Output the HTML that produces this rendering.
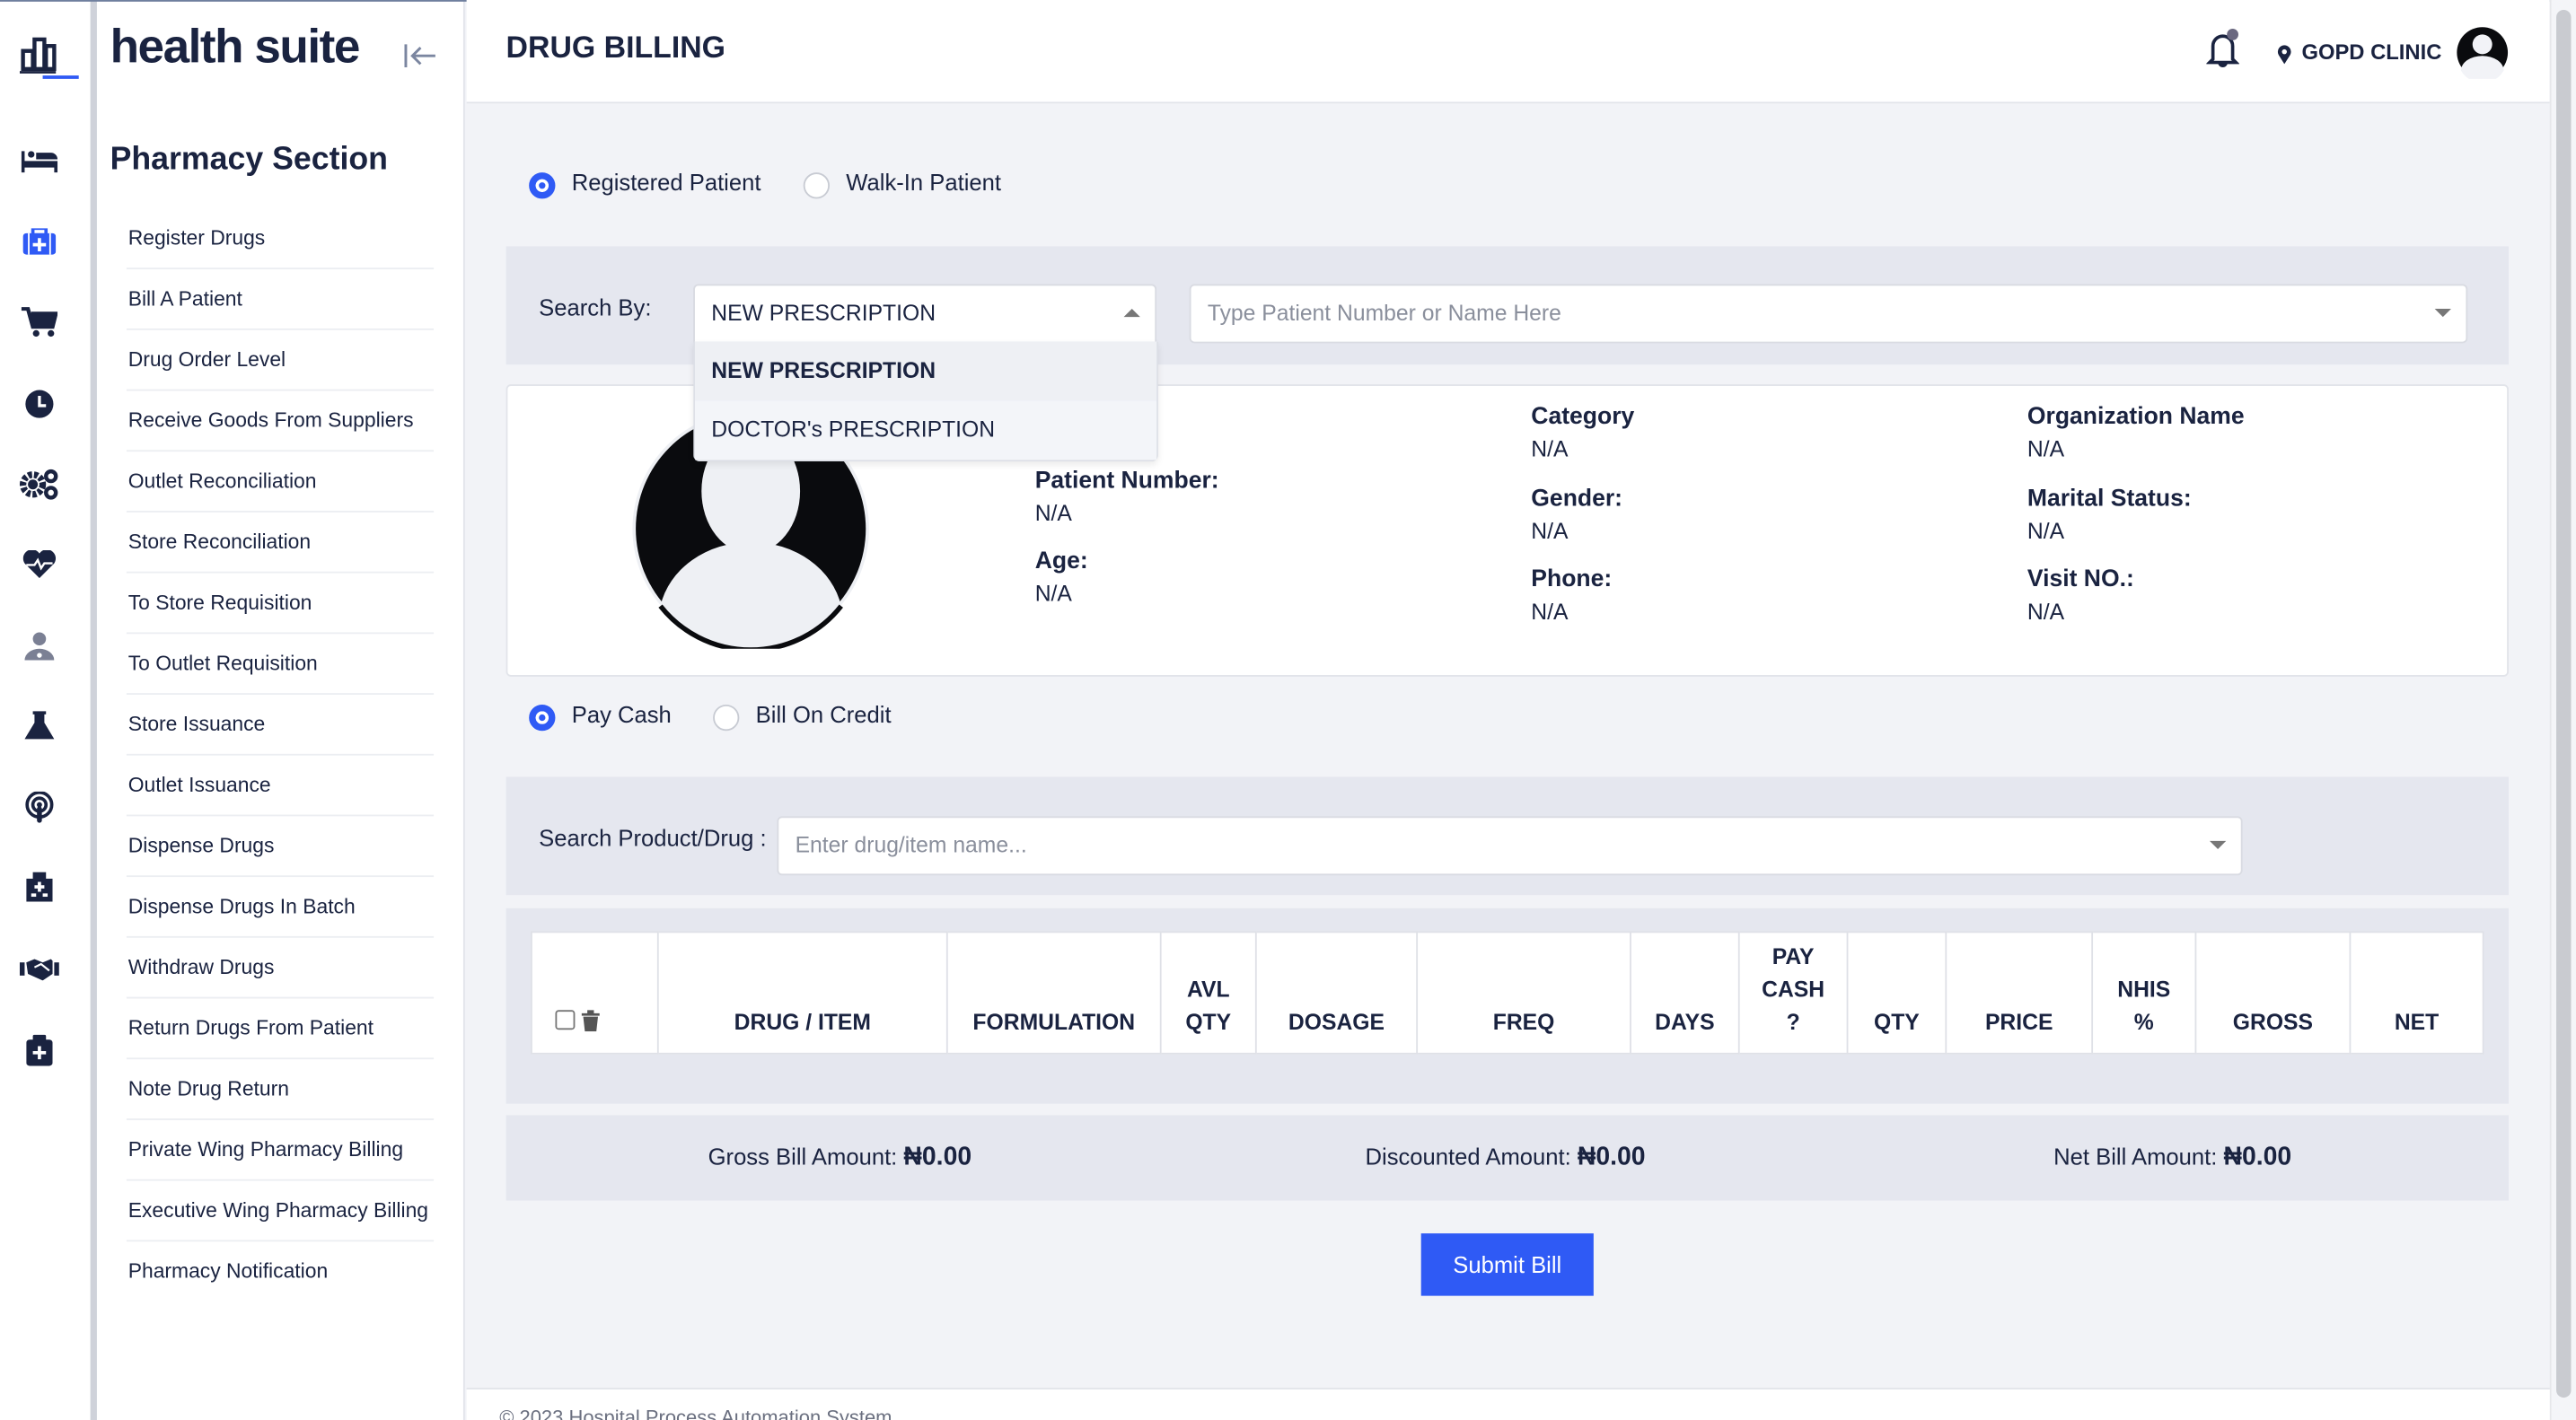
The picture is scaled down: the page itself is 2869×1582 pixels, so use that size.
<!DOCTYPE html>
<html><head><meta charset="utf-8"><style>
*{box-sizing:border-box;margin:0;padding:0}
html,body{width:2869px;height:1582px;overflow:hidden;background:#f2f3f7;font-family:"Liberation Sans",sans-serif;color:#1a2340}
#w{width:1568px;height:865px;transform:scale(1.82972);transform-origin:0 0;position:relative;background:#f2f3f7}
.a{position:absolute}
.nav{left:0;top:0;width:55px;height:865px;background:#fff}
.sep{left:55px;top:0;width:4px;height:865px;background:#cfd2da}
.side{left:59px;top:0;width:224px;height:865px;background:#fff;border-right:1px solid #e2e4ea}
.side ul{list-style:none;position:absolute;left:18px;top:127px;width:187px}
.side li{height:37px;line-height:37px;font-size:12.5px;padding-left:1px;border-bottom:1px solid #eceef2;color:#1a2340}
.side li:last-child{border:none}
.hdr{left:284px;top:0;width:1268px;height:63px;background:#fff;border-bottom:1px solid #e2e4ea}
.scroll{left:1552px;top:0;width:16px;height:865px;background:#f4f5f8;border-left:1px solid #e6e7eb}
.rad{width:16px;height:16px;border-radius:50%;border:1px solid #c8cbd3;background:#fff}
.rad.on{border:4px solid #2f5af5;box-shadow:inset 0 0 0 2px #fff;background:#2f5af5}
.lbl{font-size:14px;color:#1a2340}
.band{background:#e5e7ef}
.inp{background:#fff;border:1px solid #d9dbe2;border-radius:3px;font-size:13.5px;color:#8a8f9c;padding-left:10px;line-height:34px}
.k{font-weight:bold;font-size:14.5px;color:#1a2340}
.v{font-size:13.5px;color:#1a2340}
table{border-collapse:collapse;background:#fff}
td{border:1px solid #dfe1e7;font-weight:bold;font-size:13.5px;text-align:center;vertical-align:bottom;padding:0 4px 8px;line-height:20px;color:#1a2340}
.caret{width:0;height:0;border-left:5px solid transparent;border-right:5px solid transparent;border-top:5px solid #777}
</style></head><body><div id="w">
<div class="a nav">
<svg class="a" style="left:12px;top:20px" width="36" height="30" viewBox="0 0 36 30"><g fill="none" stroke="#1a2340" stroke-width="2.4"><rect x="2" y="11" width="6" height="11"/><rect x="9" y="4" width="6" height="18"/><rect x="16" y="8" width="5" height="14"/></g><line x1="0" y1="24" x2="22" y2="24" stroke="#1a2340" stroke-width="1.5"/><line x1="14" y1="27" x2="36" y2="27" stroke="#2f5af5" stroke-width="2"/></svg>
<svg class="a" style="left:13px;top:90px" width="23" height="16" viewBox="0 0 23 16"><path d="M0 2h2v6h20v7h-2v-3H2v3H0z M4 4a2 2 0 1 0 4 0a2 2 0 1 0-4 0z M9 3h9a4 4 0 0 1 4 4H9z" fill="#1a2340"/></svg>
<svg class="a" style="left:14px;top:139px" width="20" height="17" viewBox="0 0 20 17"><rect x="0" y="3" width="20" height="13" rx="2" fill="#2f5af5"/><rect x="6" y="0" width="8" height="4" fill="none" stroke="#2f5af5" stroke-width="2"/><path d="M9 6h2v3h3v2h-3v3H9v-3H6V9h3z" fill="#fff"/><rect x="3" y="3" width="1" height="13" fill="#fff"/><rect x="16" y="3" width="1" height="13" fill="#fff"/></svg>
<svg class="a" style="left:13px;top:187px" width="22" height="19" viewBox="0 0 22 19"><path d="M0 1h4l3 11h12l2-8H6" fill="none" stroke="#1a2340" stroke-width="2.4"/><path d="M6 5h15l-2 7H8z" fill="#1a2340"/><circle cx="9" cy="16" r="2" fill="#1a2340"/><circle cx="18" cy="16" r="2" fill="#1a2340"/></svg>
<svg class="a" style="left:15px;top:237px" width="18" height="18"><circle cx="9" cy="9" r="8.5" fill="#1a2340"/><path d="M9 4v6h4" stroke="#fff" stroke-width="1.8" fill="none"/></svg>
<svg class="a" style="left:12px;top:285px" width="24" height="20" viewBox="0 0 24 20"><circle cx="8" cy="10" r="6" fill="none" stroke="#1a2340" stroke-width="4" stroke-dasharray="2.4 1.2"/><circle cx="8" cy="10" r="3" fill="#1a2340"/><circle cx="19" cy="5" r="3" fill="none" stroke="#1a2340" stroke-width="2.4"/><circle cx="19" cy="15" r="3" fill="none" stroke="#1a2340" stroke-width="2.4"/></svg>
<svg class="a" style="left:14px;top:335px" width="20" height="17" viewBox="0 0 20 17"><path d="M10 17L1 8A5 5 0 0 1 10 2A5 5 0 0 1 19 8z" fill="#1a2340"/><path d="M2 9h5l2-3 2 5 2-3h5" stroke="#fff" stroke-width="1.3" fill="none"/></svg>
<svg class="a" style="left:15px;top:384px" width="18" height="18" viewBox="0 0 18 18"><circle cx="9" cy="5" r="4" fill="#7b8094"/><path d="M0 18a9 7 0 0 1 18 0z" fill="#7b8094"/><circle cx="9" cy="15" r="1.5" fill="#fff"/></svg>
<svg class="a" style="left:15px;top:433px" width="18" height="18" viewBox="0 0 18 18"><path d="M5 0h8v2h-1v5l6 10H0L6 7V2H5z" fill="#1a2340"/></svg>
<svg class="a" style="left:15px;top:482px" width="18" height="19" viewBox="0 0 18 19"><circle cx="9" cy="8" r="7.5" fill="none" stroke="#1a2340" stroke-width="2"/><circle cx="9" cy="8" r="4" fill="none" stroke="#1a2340" stroke-width="2"/><circle cx="9" cy="8" r="1.6" fill="#1a2340"/><rect x="7.5" y="9" width="3" height="10" rx="1.5" fill="#1a2340"/></svg>
<svg class="a" style="left:16px;top:531px" width="16" height="18" viewBox="0 0 16 18"><rect x="0" y="4" width="16" height="14" fill="#1a2340"/><rect x="4" y="0" width="8" height="5" fill="#1a2340"/><path d="M7 6h2v2h2v2H9v2H7v-2H5V8h2z" fill="#fff"/><rect x="3" y="13" width="3" height="2" fill="#fff"/><rect x="10" y="13" width="3" height="2" fill="#fff"/></svg>
<svg class="a" style="left:12px;top:583px" width="24" height="14" viewBox="0 0 24 14"><rect x="0" y="3" width="3" height="8" fill="#1a2340"/><rect x="21" y="3" width="3" height="8" fill="#1a2340"/><path d="M4 3l5-2 5 2 5-2 1 1v8l-6 4-9-4z" fill="#1a2340"/><path d="M9 6l4-2 5 4" stroke="#fff" stroke-width="1.2" fill="none"/></svg>
<svg class="a" style="left:16px;top:630px" width="16" height="19" viewBox="0 0 16 19"><rect x="0" y="3" width="16" height="16" rx="2" fill="#1a2340"/><rect x="4" y="0" width="8" height="4" rx="1" fill="#1a2340"/><path d="M7 7h2v3h3v2H9v3H7v-3H4v-2h3z" fill="#fff"/></svg>
</div>
<div class="a sep"></div>
<div class="a side">
<div class="a" style="left:8px;top:13px;font-size:29px;font-weight:bold;letter-spacing:-0.8px;color:#1a2340">health suite</div>
<svg class="a" style="left:187px;top:26px" width="20" height="16" viewBox="0 0 20 16"><path d="M1 1v14M19 8H5M10 3L5 8l5 5" stroke="#7b86a0" stroke-width="1.6" fill="none"/></svg>
<div class="a" style="left:8px;top:86px;font-size:19.5px;font-weight:bold;color:#1a2340">Pharmacy Section</div>
<ul><li>Register Drugs</li><li>Bill A Patient</li><li>Drug Order Level</li><li>Receive Goods From Suppliers</li><li>Outlet Reconciliation</li><li>Store Reconciliation</li><li>To Store Requisition</li><li>To Outlet Requisition</li><li>Store Issuance</li><li>Outlet Issuance</li><li>Dispense Drugs</li><li>Dispense Drugs In Batch</li><li>Withdraw Drugs</li><li>Return Drugs From Patient</li><li>Note Drug Return</li><li>Private Wing Pharmacy Billing</li><li>Executive Wing Pharmacy Billing</li><li>Pharmacy Notification</li></ul>
</div>
<div class="a" style="left:0;top:0;width:1568px;height:1px;background:#6f7f9e"></div>
<div class="a hdr">
<div class="a" style="left:24px;top:18px;font-size:18.5px;font-weight:bold;color:#1a2340">DRUG BILLING</div>
<svg class="a" style="left:1059px;top:17px" width="20" height="25" viewBox="0 0 20 25"><path d="M4 19V11a6 6 0 0 1 12 0v8l2 2H2z M8 21a2 2 0 0 0 4 0" stroke="#1a2340" stroke-width="2" fill="none"/><circle cx="16" cy="4" r="3.5" fill="#6a6880"/></svg>
<svg class="a" style="left:1102px;top:27px" width="9" height="12" viewBox="0 0 9 12"><path d="M4.5 12L1 6.5A4 4 0 1 1 8 6.5z" fill="#1a2340"/><circle cx="4.5" cy="4.5" r="1.5" fill="#fff"/></svg>
<div class="a" style="left:1117px;top:24px;font-size:13px;font-weight:bold;color:#1a2340">GOPD CLINIC</div>
<svg class="a" style="left:1211px;top:16px" width="32" height="32" viewBox="0 0 32 32"><circle cx="16" cy="16" r="15.5" fill="#0a0b0e"/><circle cx="16" cy="11" r="6" fill="#f2f3f7"/><path d="M3 27a13 9 0 0 1 26 0a15 15 0 0 1-26 0z" fill="#f2f3f7"/></svg>
</div>
<div class="a scroll"><div class="a" style="left:3px;top:6px;width:9px;height:845px;border-radius:5px;background:#c9cbd0"></div></div>

<div class="a rad on" style="left:322px;top:105px"></div><div class="a lbl" style="left:348px;top:103px">Registered Patient</div>
<div class="a rad" style="left:489px;top:105px"></div><div class="a lbl" style="left:515px;top:103px">Walk-In Patient</div>

<div class="a band" style="left:308px;top:150px;width:1219px;height:72px"></div>
<div class="a lbl" style="left:328px;top:179px">Search By:</div>
<div class="a inp" style="left:422px;top:173px;width:282px;height:36px;color:#1a2340;border-radius:3px 3px 0 0">NEW PRESCRIPTION</div>
<div class="a caret" style="left:684px;top:188px;transform:rotate(180deg)"></div>
<div class="a inp" style="left:724px;top:173px;width:778px;height:36px">Type Patient Number or Name Here</div>
<div class="a caret" style="left:1482px;top:188px"></div>

<div class="a" style="left:308px;top:234px;width:1219px;height:178px;background:#fff;border:1px solid #e2e4ea;border-radius:3px"></div>
<svg class="a" style="left:384px;top:249px" width="146" height="146" viewBox="0 0 146 146"><circle cx="73" cy="73" r="72" fill="#eef0f4"/><circle cx="73" cy="73" r="70" fill="#0a0b0e"/><ellipse cx="73" cy="50" rx="30" ry="38" fill="#eef0f4"/><path d="M18 120a56 48 0 0 1 110 0a70 70 0 0 1-110 0z" fill="#eef0f4"/><path d="M18 120a70 70 0 0 0 110 0" stroke="#0a0b0e" stroke-width="3" fill="none"/></svg>
<div class="a k" style="left:630px;top:285px">Patient Number:</div><div class="a v" style="left:630px;top:305px">N/A</div>
<div class="a k" style="left:630px;top:334px">Age:</div><div class="a v" style="left:630px;top:354px">N/A</div>
<div class="a k" style="left:932px;top:246px">Category</div><div class="a v" style="left:932px;top:266px">N/A</div>
<div class="a k" style="left:932px;top:296px">Gender:</div><div class="a v" style="left:932px;top:316px">N/A</div>
<div class="a k" style="left:932px;top:345px">Phone:</div><div class="a v" style="left:932px;top:365px">N/A</div>
<div class="a k" style="left:1234px;top:246px">Organization Name</div><div class="a v" style="left:1234px;top:266px">N/A</div>
<div class="a k" style="left:1234px;top:296px">Marital Status:</div><div class="a v" style="left:1234px;top:316px">N/A</div>
<div class="a k" style="left:1234px;top:345px">Visit NO.:</div><div class="a v" style="left:1234px;top:365px">N/A</div>

<div class="a" style="left:422px;top:208px;width:283px;height:73px;background:#f2f3f7;border:1px solid #dcdfe6;border-top:none;border-radius:0 0 4px 4px;box-shadow:0 2px 4px rgba(0,0,0,.08)">
<div style="height:36px;line-height:36px;padding-left:10px;font-size:13.5px;font-weight:bold;background:#eef0f4">NEW PRESCRIPTION</div>
<div style="height:36px;line-height:36px;padding-left:10px;font-size:13.5px;background:#f3f5f9">DOCTOR's PRESCRIPTION</div></div>

<div class="a rad on" style="left:322px;top:429px"></div><div class="a lbl" style="left:348px;top:427px">Pay Cash</div>
<div class="a rad" style="left:434px;top:429px"></div><div class="a lbl" style="left:460px;top:427px">Bill On Credit</div>

<div class="a band" style="left:308px;top:473px;width:1219px;height:72px"></div>
<div class="a lbl" style="left:328px;top:502px">Search Product/Drug :</div>
<div class="a inp" style="left:473px;top:497px;width:892px;height:36px">Enter drug/item name...</div>
<div class="a caret" style="left:1345px;top:512px"></div>

<div class="a band" style="left:308px;top:553px;width:1219px;height:119px"></div>
<table class="a" style="left:323px;top:567px;width:1189px;height:75px"><tr>
<td style="width:77px;text-align:left;padding-left:14px;padding-bottom:10px"><span style="display:inline-block;width:12px;height:12px;border:1px solid #777;border-radius:2px;vertical-align:middle"></span> <svg width="11" height="13" viewBox="0 0 11 13" style="vertical-align:middle"><path d="M0 2h11v1.5H0zM3.5 0h4v2h-4zM1 4h9l-1 9H2z" fill="#555"/></svg></td>
<td style="width:176px">DRUG / ITEM</td><td style="width:130px">FORMULATION</td><td style="width:58px">AVL<br>QTY</td><td style="width:98px">DOSAGE</td><td style="width:130px">FREQ</td><td style="width:66px">DAYS</td><td style="width:66px">PAY<br>CASH<br>?</td><td style="width:60px">QTY</td><td style="width:89px">PRICE</td><td style="width:63px">NHIS<br>%</td><td style="width:94px">GROSS</td><td>NET</td></tr></table>

<div class="a band" style="left:308px;top:679px;width:1219px;height:52px"></div>
<div class="a lbl" style="left:431px;top:696px">Gross Bill Amount: <b style="font-size:15.5px">₦0.00</b></div>
<div class="a lbl" style="left:831px;top:696px">Discounted Amount: <b style="font-size:15.5px">₦0.00</b></div>
<div class="a lbl" style="left:1250px;top:696px">Net Bill Amount: <b style="font-size:15.5px">₦0.00</b></div>

<div class="a" style="left:865px;top:751px;width:105px;height:38px;background:#2f5af5;color:#fff;font-size:14px;text-align:center;line-height:38px">Submit Bill</div>
<div class="a" style="left:284px;top:845px;width:1268px;height:1px;background:#e2e4ea"></div>
<div class="a" style="left:284px;top:846px;width:1268px;height:19px;background:#fff"></div>
<div class="a" style="left:304px;top:856px;font-size:12px;color:#6b7080">© 2023 Hospital Process Automation System</div>
</div></body></html>
